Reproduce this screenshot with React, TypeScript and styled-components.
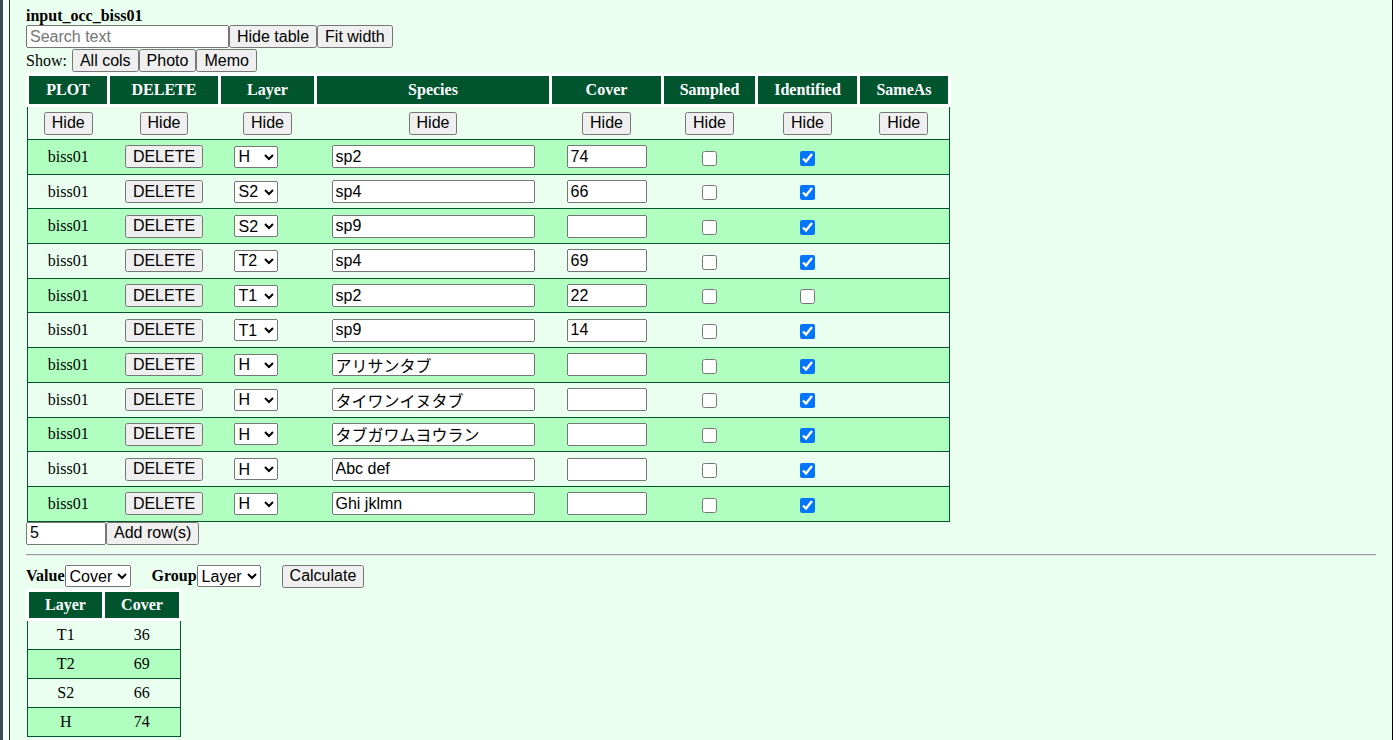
import React from 'react';
import styled, { createGlobalStyle } from 'styled-components';

const GlobalStyle = createGlobalStyle`
  html, body { margin: 0; padding: 0; background: #ffffff; overflow: hidden; }
  body {
    font-family: "Liberation Serif", "Times New Roman", serif;
    font-size: 16px;
    color: #000;
  }
`;

const DARK = '#00552f';
const ROW_GREEN = '#b0ffc0';
const PAGE_GREEN = '#ebfff0';

const Frame = styled.div`
  display: flex;
  height: 740px;
`;

const EdgeStrip = styled.div`
  flex: none;
  width: 3px;
  background: #3d4b59;
`;

const EdgeGap = styled.div`
  flex: none;
  width: 6px;
  background: #f6fff7;
`;

const Panel = styled.main`
  flex: none;
  box-sizing: border-box;
  width: 1384px;
  height: 740px;
  padding: 7px 16px 0 16px;
  background: ${PAGE_GREEN};
  border-left: 1px solid #2e2e2e;
  border-right: 1px solid #000;
`;

const Title = styled.div`
  font-weight: bold;
  line-height: 18px;
`;

const ControlRow = styled.div<{ $gap?: number; $mt?: number; $h?: number }>`
  display: flex;
  align-items: center;
  gap: ${(p) => p.$gap ?? 0}px;
  margin-top: ${(p) => p.$mt ?? 0}px;
  ${(p) => (p.$h ? `height: ${p.$h}px;` : '')}
`;

const Label = styled.span<{ $bold?: boolean; $space?: number }>`
  font-weight: ${(p) => (p.$bold ? 'bold' : 'normal')};
  margin-right: ${(p) => p.$space ?? 0}px;
`;

const Btn = styled.button`
  font-family: "Liberation Sans", Arial, sans-serif;
  font-size: 16px;
  margin: 0;
  height: 23px;
  padding-top: 0;
  padding-bottom: 0;
`;

const TextInput = styled.input<{ $w: number }>`
  font-family: "Liberation Sans", Arial, "Noto Sans CJK JP", sans-serif;
  font-size: 16px;
  box-sizing: border-box;
  width: ${(p) => p.$w}px;
  height: 23px;
  margin: 0;
`;

const Select = styled.select<{ $w?: number }>`
  font-family: "Liberation Sans", Arial, sans-serif;
  font-size: 16px;
  margin: 0;
  height: 22px;
  ${(p) => (p.$w ? `width: ${p.$w}px;` : '')}
`;

const Check = styled.input`
  width: 15px;
  height: 15px;
  margin: 0;
  vertical-align: middle;
`;

const Table = styled.table<{ $w: number }>`
  border-collapse: collapse;
  table-layout: fixed;
  width: ${(p) => p.$w}px;
  border: 1px solid ${DARK};
`;

const Th = styled.th<{ $h?: number }>`
  background: ${DARK};
  color: #fff;
  font-weight: bold;
  border: 3px solid #fff;
  padding: 0 5px;
  height: ${(p) => p.$h ?? 28}px;
  line-height: 18px;
  text-align: center;
`;

const BodyRow = styled.tr`
  &:nth-child(even) { background: ${ROW_GREEN}; }
  &:nth-child(odd) { background: ${PAGE_GREEN}; }
`;

const Td = styled.td<{ $ruled?: boolean; $left?: boolean; $h: number }>`
  padding: 0 5px;
  height: ${(p) => p.$h}px;
  text-align: ${(p) => (p.$left ? 'left' : 'center')};
  ${(p) => (p.$left ? 'padding-left: 14px;' : '')}
  border-top: ${(p) => (p.$ruled ? `1px solid ${DARK}` : 'none')};
  line-height: 18px;
  white-space: nowrap;
  vertical-align: middle;
`;

const Rule = styled.hr`
  margin: 9px 0 8px 0;
  border: none;
  border-top: 1px solid #9a9a9a;
  border-bottom: 1px solid #e4e4e4;
`;

const Field = styled.div`
  display: flex;
  align-items: center;
`;

const mainCols = [81, 111, 96, 235, 112, 94, 102, 91];
const headers = ['PLOT', 'DELETE', 'Layer', 'Species', 'Cover', 'Sampled', 'Identified', 'SameAs'];

type Row = { layer: string; sp: string; cover: string; sampled: boolean; ident: boolean };
const rows: Row[] = [
  { layer: 'H', sp: 'sp2', cover: '74', sampled: false, ident: true },
  { layer: 'S2', sp: 'sp4', cover: '66', sampled: false, ident: true },
  { layer: 'S2', sp: 'sp9', cover: '', sampled: false, ident: true },
  { layer: 'T2', sp: 'sp4', cover: '69', sampled: false, ident: true },
  { layer: 'T1', sp: 'sp2', cover: '22', sampled: false, ident: false },
  { layer: 'T1', sp: 'sp9', cover: '14', sampled: false, ident: true },
  { layer: 'H', sp: 'アリサンタブ', cover: '', sampled: false, ident: true },
  { layer: 'H', sp: 'タイワンイヌタブ', cover: '', sampled: false, ident: true },
  { layer: 'H', sp: 'タブガワムヨウラン', cover: '', sampled: false, ident: true },
  { layer: 'H', sp: 'Abc def', cover: '', sampled: false, ident: true },
  { layer: 'H', sp: 'Ghi jklmn', cover: '', sampled: false, ident: true },
];

const summary = [
  ['T1', '36'],
  ['T2', '69'],
  ['S2', '66'],
  ['H', '74'],
];

const ROW_H = 33.7;

export default function App() {
  return (
    <>
      <GlobalStyle />
      <Frame>
        <EdgeStrip />
        <EdgeGap />
        <Panel>
          <Title>input_occ_biss01</Title>
          <ControlRow>
            <TextInput $w={203} placeholder="Search text" />
            <Btn>Hide table</Btn>
            <Btn>Fit width</Btn>
          </ControlRow>
          <ControlRow $h={25}>
            <Label $space={5}>Show:</Label>
            <Btn>All cols</Btn>
            <Btn>Photo</Btn>
            <Btn>Memo</Btn>
          </ControlRow>
          <Table $w={922}>
            <colgroup>
              {mainCols.map((w, i) => (
                <col key={i} style={{ width: w }} />
              ))}
            </colgroup>
            <thead>
              <tr>
                {headers.map((h) => (
                  <Th key={h}>{h}</Th>
                ))}
              </tr>
            </thead>
            <tbody>
              <BodyRow>
                {headers.map((h) => (
                  <Td key={h} $h={32}>
                    <Btn>Hide</Btn>
                  </Td>
                ))}
              </BodyRow>
              {rows.map((r, i) => (
                <BodyRow key={i}>
                  <Td $ruled $h={ROW_H}>biss01</Td>
                  <Td $ruled $h={ROW_H}>
                    <Btn>DELETE</Btn>
                  </Td>
                  <Td $ruled $left $h={ROW_H}>
                    <Select $w={44} defaultValue={r.layer}>
                      <option>H</option>
                      <option>S2</option>
                      <option>T1</option>
                      <option>T2</option>
                    </Select>
                  </Td>
                  <Td $ruled $h={ROW_H}>
                    <TextInput $w={203} defaultValue={r.sp} />
                  </Td>
                  <Td $ruled $h={ROW_H}>
                    <TextInput $w={80} defaultValue={r.cover} />
                  </Td>
                  <Td $ruled $h={ROW_H}>
                    <Check type="checkbox" defaultChecked={r.sampled} />
                  </Td>
                  <Td $ruled $h={ROW_H}>
                    <Check type="checkbox" defaultChecked={r.ident} />
                  </Td>
                  <Td $ruled $h={ROW_H} />
                </BodyRow>
              ))}
            </tbody>
          </Table>
          <ControlRow>
            <TextInput $w={80} defaultValue="5" />
            <Btn>Add row(s)</Btn>
          </ControlRow>
          <Rule />
          <ControlRow $gap={21} $h={25}>
            <Field>
              <Label $bold>Value</Label>
              <Select $w={66} defaultValue="Cover">
                <option>Cover</option>
              </Select>
            </Field>
            <Field>
              <Label $bold>Group</Label>
              <Select $w={64} defaultValue="Layer">
                <option>Layer</option>
              </Select>
            </Field>
            <Btn>Calculate</Btn>
          </ControlRow>
          <Table $w={153}>
            <colgroup>
              <col style={{ width: 76 }} />
              <col style={{ width: 77 }} />
            </colgroup>
            <thead>
              <tr>
                <Th $h={26}>Layer</Th>
                <Th $h={26}>Cover</Th>
              </tr>
            </thead>
            <tbody>
              {summary.map(([l, v], i) => (
                <BodyRow key={l}>
                  <Td $ruled={i > 0} $h={28}>{l}</Td>
                  <Td $ruled={i > 0} $h={28}>{v}</Td>
                </BodyRow>
              ))}
            </tbody>
          </Table>
        </Panel>
      </Frame>
    </>
  );
}
